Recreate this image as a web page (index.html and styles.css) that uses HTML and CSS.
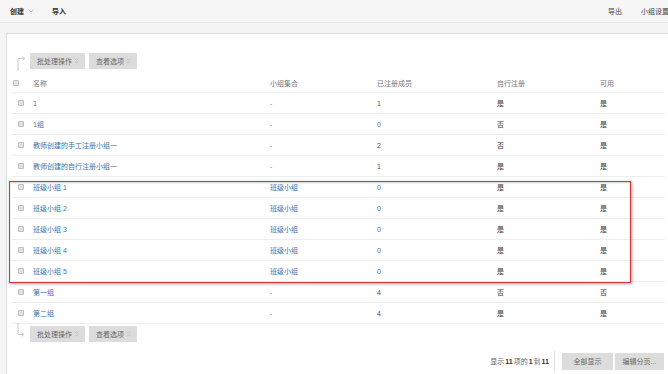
FILE: index.html
```html
<!DOCTYPE html>
<html lang="zh-CN">
  <head>
    <meta charset="UTF-8" />
    <title>小组</title>
    <link rel="stylesheet" href="styles.css">
  </head>
  <body>
    <div class="topbar">
      <div class="nav-left">
        <span class="nav-item">创建
          <svg class="caret" viewBox="0 0 6 4" width="6" height="4"><path d="M0.5 0.5 L3 3 L5.5 0.5" fill="none" stroke="#aaa" stroke-width="0.8"/></svg>
        </span>
        <span class="nav-item">导入</span>
      </div>
      <div class="nav-right">
        <span class="nav-item light">导出</span>
        <span class="nav-item light">小组设置</span>
      </div>
    </div>

    <div class="panel">
      <div class="content">
        <div class="bulk top">
          <svg class="bulk-arrow" viewBox="0 0 18 18" width="18" height="18"><path d="M6 18 V5.5 H12.5 M10.5 3.5 L12.8 5.5 L10.5 7.5" fill="none" stroke="#c8c8c8" stroke-width="1"/></svg>
          <button class="btn">批处理操作 <svg class="dbl" viewBox="0 0 5 6" width="5" height="6"><path d="M0.6 0.6 L2.5 2.5 L4.4 0.6 M0.6 3.2 L2.5 5.1 L4.4 3.2" fill="none" stroke="#bdbdbd" stroke-width="0.8"/></svg></button>
          <button class="btn">查看选项 <svg class="dbl" viewBox="0 0 5 6" width="5" height="6"><path d="M0.6 0.6 L2.5 2.5 L4.4 0.6 M0.6 3.2 L2.5 5.1 L4.4 3.2" fill="none" stroke="#bdbdbd" stroke-width="0.8"/></svg></button>
        </div>

        <div class="row head">
          <span class="cb head-cb"></span>
          <span>名称</span>
          <span>小组集合</span>
          <span>已注册成员</span>
          <span>自行注册</span>
          <span>可用</span>
        </div>

        <div class="row"><span class="cb"></span><a class="link">1</a><span class="dash">-</span><span class="count">1</span><span>是</span><span>是</span></div>
        <div class="row"><span class="cb"></span><a class="link">1组</a><span class="dash">-</span><span class="count zero">0</span><span>否</span><span>是</span></div>
        <div class="row"><span class="cb"></span><a class="link">教师创建的手工注册小组一</a><span class="dash">-</span><span class="count">2</span><span>否</span><span>是</span></div>
        <div class="row"><span class="cb"></span><a class="link">教师创建的自行注册小组一</a><span class="dash">-</span><span class="count">1</span><span>是</span><span>是</span></div>

        <div class="highlight">
          <div class="row"><span class="cb"></span><a class="link">班级小组 1</a><a class="link">班级小组</a><span class="count zero">0</span><span>是</span><span>是</span></div>
          <div class="row"><span class="cb"></span><a class="link">班级小组 2</a><a class="link">班级小组</a><span class="count zero">0</span><span>是</span><span>是</span></div>
          <div class="row"><span class="cb"></span><a class="link">班级小组 3</a><a class="link">班级小组</a><span class="count zero">0</span><span>是</span><span>是</span></div>
          <div class="row"><span class="cb"></span><a class="link">班级小组 4</a><a class="link">班级小组</a><span class="count zero">0</span><span>是</span><span>是</span></div>
          <div class="row"><span class="cb"></span><a class="link">班级小组 5</a><a class="link">班级小组</a><span class="count zero">0</span><span>是</span><span>是</span></div>
        </div>

        <div class="row"><span class="cb"></span><a class="link">第一组</a><span class="dash">-</span><span class="count">4</span><span>否</span><span>否</span></div>
        <div class="row"><span class="cb"></span><a class="link">第二组</a><span class="dash">-</span><span class="count">4</span><span>是</span><span>是</span></div>

        <div class="bulk bottom">
          <svg class="bulk-arrow" viewBox="0 0 18 14" width="18" height="14"><path d="M6 0 V11.5 H11.5 M9.5 9.5 L11.8 11.5 L9.5 13.5" fill="none" stroke="#c8c8c8" stroke-width="1"/></svg>
          <button class="btn">批处理操作 <svg class="dbl" viewBox="0 0 5 6" width="5" height="6"><path d="M0.6 0.6 L2.5 2.5 L4.4 0.6 M0.6 3.2 L2.5 5.1 L4.4 3.2" fill="none" stroke="#bdbdbd" stroke-width="0.8"/></svg></button>
          <button class="btn">查看选项 <svg class="dbl" viewBox="0 0 5 6" width="5" height="6"><path d="M0.6 0.6 L2.5 2.5 L4.4 0.6 M0.6 3.2 L2.5 5.1 L4.4 3.2" fill="none" stroke="#bdbdbd" stroke-width="0.8"/></svg></button>
        </div>

        <div class="pager">
          <span class="pager-info">显示 <b>11</b> 项的<b>1</b> 到 <b>11</b></span>
          <button class="btn pager-btn">全部显示</button>
          <button class="btn pager-btn">编辑分页...</button>
        </div>
      </div>
    </div>
  </body>
</html>
```

FILE: styles.css
```css
* {
  margin: 0;
  padding: 0;
  box-sizing: border-box;
}
html, body {
  height: 100%;
  overflow: hidden;
}
body {
  background: #f4f4f4;
  font-family: "Liberation Sans", "Noto Sans CJK SC", sans-serif;
  font-size: 7px;
  color: #333;
}
.topbar {
  height: 23px;
  display: flex;
  justify-content: space-between;
  align-items: center;
  padding-left: 10px;
  border-bottom: 1px solid #e6e6e6;
  background: #f6f6f6;
}
.nav-left, .nav-right {
  display: flex;
  align-items: center;
}
.nav-left {
  gap: 18px;
}
.nav-right {
  gap: 19px;
  margin-right: -1px;
}
.nav-item {
  display: flex;
  align-items: center;
  gap: 4px;
  font-weight: 700;
  color: #333;
}
.nav-item.light {
  font-weight: 400;
  color: #444;
}
.panel {
  margin: 10px 0 0 6px;
  height: calc(100% - 33px);
  background: #fff;
  border-left: 1px solid #dcdcdc;
  border-top: 1px solid #dcdcdc;
}
.content {
  width: 653px;
  margin-left: 5px;
}
.bulk {
  display: flex;
  align-items: flex-start;
  gap: 4px;
}
.bulk.top {
  padding-top: 19px;
  height: 36px;
}
.bulk.bottom {
  padding-top: 2px;
  height: 18px;
}
.bulk-arrow {
  margin-right: -4px;
  flex-shrink: 0;
}
.bulk.bottom .bulk-arrow {
  margin-top: -3px;
}
.btn {
  height: 16px;
  display: flex;
  align-items: center;
  gap: 2px;
  padding: 0 6px 0 7px;
  border: none;
  background: #dcdcdc;
  color: #666;
  font-family: inherit;
  font-size: 7px;
}
.row {
  display: grid;
  grid-template-columns: 21px 237px 107px 120px 103px 65px;
  align-items: center;
  height: 21px;
  border-bottom: 1px solid #ededed;
  color: #333;
}
.row.head {
  margin-top: 4px;
  height: 19px;
  color: #777;
}
.cb {
  width: 6px;
  height: 6px;
  margin-left: 6px;
  border: 1px solid #bdbdbd;
  border-radius: 1px;
  background: #e2e2e2;
}
.cb.head-cb {
  margin-left: 1px;
}
.link {
  color: #3a74ad;
  text-decoration: none;
}
.dash {
  color: #888;
}
.count {
  color: #555;
}
.count.zero {
  color: #4d6293;
}
.highlight {
  position: relative;
}
.highlight::after {
  content: "";
  position: absolute;
  top: 4px;
  bottom: -1px;
  left: -3px;
  right: 34px;
  border: 1.5px solid #d6353c;
  box-shadow: 1px 1px 3px rgba(0, 0, 0, 0.35), inset 0 1px 2px rgba(0, 0, 0, 0.2);
}
.pager {
  display: flex;
  justify-content: flex-end;
  align-items: center;
  margin-top: 9px;
  padding-right: 1px;
}
.pager-info {
  color: #666;
  padding-right: 4px;
  margin-right: 5px;
  height: 20px;
  display: flex;
  align-items: center;
  border-right: 1px solid #e2e2e2;
}
.pager-info b {
  color: #333;
  margin: 0 1px;
}
.pager-btn {
  height: 17px;
  justify-content: center;
  padding: 0;
  margin-left: 2px;
}
.pager-btn:first-of-type {
  width: 51px;
}
.pager-btn:last-child {
  width: 49px;
}
```
